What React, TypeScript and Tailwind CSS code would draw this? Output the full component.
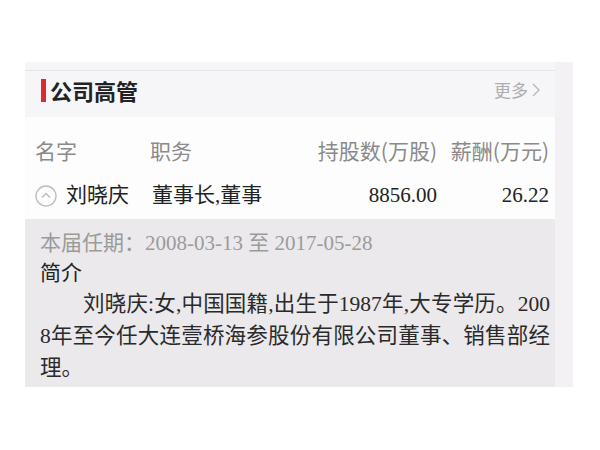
export default function App() {
  const sans = "font-['Noto_Sans_CJK_SC','Noto_Sans',sans-serif]";
  const mixed = "font-['Liberation_Serif','Noto_Sans_CJK_SC',serif]";

  return (
    <div className="min-h-[450px] w-[600px] bg-white pt-[62px] pl-[25px]">
      <div className="flex w-[548px] bg-[#f6f5f7]">
        <div className="w-[530px]">
          {/* section header */}
          <div className="mt-[8px] border-t border-[#e6e5e8] flex h-[47px] pb-[8px] items-center justify-between pl-[16px] pr-[14px]">
            <div className="flex items-center gap-[4px]">
              <span className="block w-[5px] h-[23px] bg-[#dc2a31]" />
              <span className={`${sans} text-[22px] font-semibold text-[#222]`}>公司高管</span>
            </div>
            <div className={`${sans} flex items-center gap-[3px] text-[17px] text-[#adadad]`}>
              更多
              <svg width="10" height="16" viewBox="0 0 10 16" fill="none">
                <path d="M2 2l6 6-6 6" stroke="#b5b5b5" strokeWidth="1.3" />
              </svg>
            </div>
          </div>

          {/* table */}
          <div className="bg-[#fdfdfd] pl-[10px] pr-[6px]">
            <div className={`${sans} grid grid-cols-[113px_1fr_auto_112px] h-[54px] pt-[14px] items-center text-[21px] text-[#8a8a8a]`}>
              <span>名字</span>
              <span className="pl-[2px]">职务</span>
              <span className="text-right">持股数(万股)</span>
              <span className="text-right">薪酬(万元)</span>
            </div>
            <div className={`${mixed} grid grid-cols-[113px_1fr_auto_112px] h-[48px] pt-[2px] items-center text-[21px] text-[#222]`}>
              <div className="flex items-center gap-[9px]">
                <svg width="22" height="22" viewBox="0 0 22 22" fill="none">
                  <circle cx="11" cy="11" r="10" stroke="#bdbdbd" strokeWidth="1.4" />
                  <path d="M7 12.5l4-4 4 4" stroke="#bdbdbd" strokeWidth="1.4" />
                </svg>
                <span>刘晓庆</span>
              </div>
              <span className="pl-[4px]">董事长,董事</span>
              <span className="text-right">8856.00</span>
              <span className="text-right">26.22</span>
            </div>
          </div>

          {/* detail */}
          <div className={`${mixed} bg-[#ebe9ec] pl-[15px] pr-[5px] pt-[8px] pb-[3px]`}>
            <div className="leading-[28px] text-[21px] text-[#9b9b9b]">
              <span className={sans}>本届任期：</span>2008-03-13 至 2017-05-28
            </div>
            <div className={`${sans} leading-[28px] text-[21px] text-[#222]`}>简介</div>
            <p className="mt-[3px] w-[510px] text-[21.5px] leading-[32px] text-[#2a2a2a] text-justify break-all indent-[2em]">
              刘晓庆:女,中国国籍,出生于1987年,大专学历。2008年至今任大连壹桥海参股份有限公司董事、销售部经理。
            </p>
          </div>
        </div>
        <div className="flex-1 bg-[#f3f1f4]" />
      </div>
    </div>
  );
}
